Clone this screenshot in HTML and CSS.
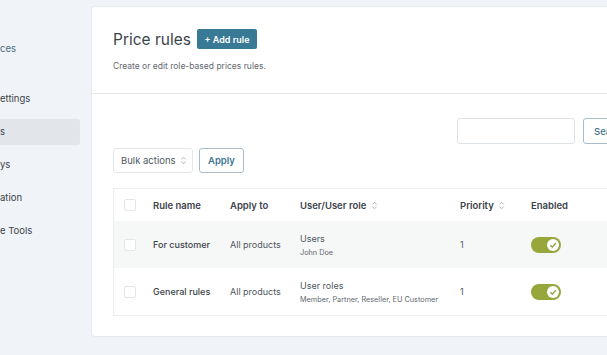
FILE: index.html
```html
<!DOCTYPE html>
<html lang="en">
<head>
    <meta charset="UTF-8">
    <meta name="viewport" content="width=device-width, initial-scale=1.0">
    <title>Price rules</title>
    <link rel="stylesheet" href="styles.css">
</head>
<body>
    <div class="layout">
        <nav class="sidebar">
            <div class="nav-heading">ces</div>
            <a class="nav-item">ettings</a>
            <a class="nav-item active">s</a>
            <a class="nav-item">ys</a>
            <a class="nav-item">ation</a>
            <a class="nav-item">e Tools</a>
        </nav>

        <main class="card">
            <div class="card-header">
                <div class="title-row">
                    <h1>Price rules</h1>
                    <button class="btn-primary">+ Add rule</button>
                </div>
                <p class="subtitle">Create or edit role-based prices rules.</p>
            </div>

            <div class="card-body">
                <div class="search-row">
                    <input class="search-input" type="text">
                    <button class="btn-outline">Search</button>
                </div>

                <div class="bulk-row">
                    <div class="select">Bulk actions
                        <svg class="sort" viewBox="0 0 8 10"><path d="M1.5 3.8L4 1.3l2.5 2.5M1.5 6.2L4 8.7l2.5-2.5"/></svg>
                    </div>
                    <button class="btn-outline">Apply</button>
                </div>

                <table class="rules">
                    <thead>
                        <tr>
                            <th class="col-check"><span class="checkbox"></span></th>
                            <th class="col-name">Rule name</th>
                            <th class="col-apply">Apply to</th>
                            <th class="col-role">User/User role
                                <svg class="sort" viewBox="0 0 8 10"><path d="M1.5 3.8L4 1.3l2.5 2.5M1.5 6.2L4 8.7l2.5-2.5"/></svg>
                            </th>
                            <th class="col-priority">Priority
                                <svg class="sort" viewBox="0 0 8 10"><path d="M1.5 3.8L4 1.3l2.5 2.5M1.5 6.2L4 8.7l2.5-2.5"/></svg>
                            </th>
                            <th>Enabled</th>
                        </tr>
                    </thead>
                    <tbody>
                        <tr class="striped">
                            <td><span class="checkbox"></span></td>
                            <td class="name">For customer</td>
                            <td>All products</td>
                            <td>Users<small>John Doe</small></td>
                            <td>1</td>
                            <td><span class="toggle"><span class="knob"><svg viewBox="0 0 10 10"><path d="M2.8 5.2l1.6 1.6 3-3.4"/></svg></span></span></td>
                        </tr>
                        <tr>
                            <td><span class="checkbox"></span></td>
                            <td class="name">General rules</td>
                            <td>All products</td>
                            <td>User roles<small>Member, Partner, Reseller, EU Customer</small></td>
                            <td>1</td>
                            <td><span class="toggle"><span class="knob"><svg viewBox="0 0 10 10"><path d="M2.8 5.2l1.6 1.6 3-3.4"/></svg></span></span></td>
                        </tr>
                    </tbody>
                </table>
            </div>
        </main>
    </div>
</body>
</html>
```

FILE: styles.css
```css
body {
    margin: 0;
    background: #f0f3f7;
    font-family: Inter, "Noto Sans", sans-serif;
    color: #3c434a;
    overflow: hidden;
}
.layout {
    display: flex;
    align-items: flex-start;
    width: 700px;
}
.sidebar {
    width: 80px;
    margin-right: 11px;
    padding-top: 42px;
    display: flex;
    flex-direction: column;
    font-size: 9.5px;
}
.nav-heading {
    color: #4d6d7e;
    height: 14px;
    line-height: 14px;
    margin-bottom: 30px;
}
.nav-item {
    height: 26px;
    line-height: 26px;
    margin-bottom: 7px;
    color: #3c434a;
    border-radius: 0 3px 3px 0;
}
.nav-item.active { background: #e2e6eb; }

.card {
    width: 573px;
    height: 331px;
    margin-top: 6px;
    background: #fff;
    border: 1px solid #e6e9ed;
    border-radius: 4px;
    box-sizing: border-box;
}
.card-header {
    padding: 22px 21px 0;
    height: 87px;
    box-sizing: border-box;
    border-bottom: 1px solid #e3e6ea;
}
.title-row {
    display: flex;
    align-items: center;
    gap: 6px;
}
h1 {
    margin: 0;
    font-size: 15.5px;
    font-weight: 400;
    color: #3c434a;
}
.btn-primary {
    background: #387a96;
    color: #fff;
    border: 0;
    border-radius: 2px;
    height: 20px;
    width: 60px;
    padding: 0;
    font: 600 9px Inter, sans-serif;
}
.subtitle {
    margin: 12px 0 0;
    font-size: 8.5px;
    color: #646970;
}
.card-body {
    padding: 24px 0 0 21px;
}
.search-row {
    display: flex;
    justify-content: flex-end;
    gap: 8px;
    padding-right: 22px;
}
.search-input {
    width: 118px;
    height: 26px;
    box-sizing: border-box;
    border: 1px solid #dde2e6;
    border-radius: 3px;
    margin: 0;
}
.btn-outline {
    height: 26px;
    padding: 0 10px;
    background: #fff;
    border: 1px solid #a9bdc8;
    border-radius: 3px;
    color: #3f7590;
    font: 600 9.5px Inter, sans-serif;
}
.search-row .btn-outline { width: 58px; font-weight: 500; text-align: left; }
.bulk-row {
    display: flex;
    gap: 6px;
    margin-top: 4px;
}
.select {
    width: 80px;
    height: 25px;
    box-sizing: border-box;
    border: 1px solid #e4e7ea;
    border-radius: 3px;
    font-size: 9.5px;
    line-height: 23px;
    padding-left: 7px;
    color: #50575e;
}
.bulk-row .btn-outline { height: 25px; width: 45px; padding: 0; }
.sort {
    width: 7px;
    height: 9px;
    margin-left: 2px;
    vertical-align: -1px;
    fill: none;
    stroke: #9aa1a7;
    stroke-width: 0.9;
}

.rules {
    margin-top: 15px;
    width: 530px;
    border-collapse: collapse;
    border: 1px solid #eceef0;
    font-size: 9px;
    table-layout: fixed;
}
.rules th {
    height: 32px;
    text-align: left;
    font-weight: 600;
    font-size: 9.5px;
    color: #3c434a;
    padding: 0;
}
.rules td {
    height: 47px;
    padding: 0;
    color: #50575e;
}
.col-check { width: 29px; }
.col-name { width: 77px; }
.col-apply { width: 70px; }
.col-role { width: 160px; }
.col-priority { width: 71px; }
.rules th:first-child, .rules td:first-child { padding-left: 10px; }
.rules tr.striped { background: #f6f7f7; }
.rules td.name { font-weight: 500; color: #3c434a; }
.rules small {
    display: block;
    font-size: 7.3px;
    margin-top: 4px;
    color: #646970;
}
.checkbox {
    display: block;
    width: 10px;
    height: 10px;
    border: 1px solid #e3e6e9;
    border-radius: 2px;
    background: #fff;
}
.toggle {
    display: flex;
    justify-content: flex-end;
    align-items: center;
    width: 30px;
    height: 16px;
    border-radius: 8px;
    background: #97a73c;
    padding: 0 2px;
    box-sizing: border-box;
}
.knob {
    width: 12px;
    height: 12px;
    border-radius: 50%;
    background: #fff;
    display: flex;
}
.knob svg {
    width: 12px;
    height: 12px;
    fill: none;
    stroke: #8a9a35;
    stroke-width: 1.1;
}
```
